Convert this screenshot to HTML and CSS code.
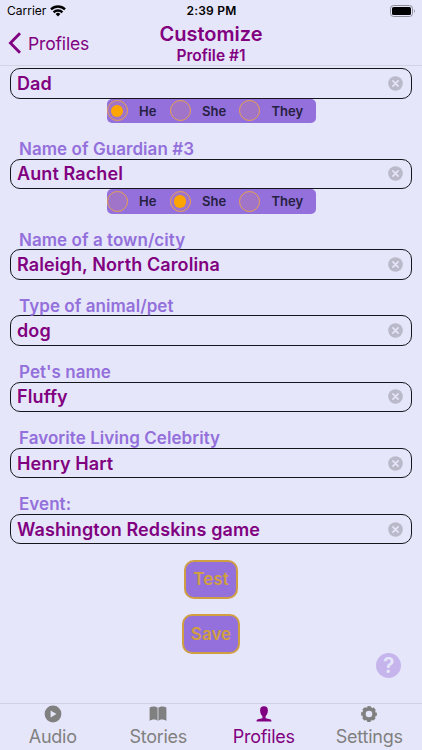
FILE: index.html
```html
<!DOCTYPE html>
<html lang="en">
<head>
    <meta charset="UTF-8">
    <meta name="viewport" content="width=device-width, initial-scale=1.0">
    <title>Customize Profile</title>
    <link rel="stylesheet" href="styles.css">
</head>
<body>
    <!-- shared icons -->
    <svg class="symbols" width="0" height="0">
        <symbol id="clear" viewBox="0 0 15 15">
            <circle cx="7.5" cy="7.5" r="7.3" fill="#b9b9ca"/>
            <path d="M4.9 4.9l5.2 5.2M10.1 4.9l-5.2 5.2" stroke="#e6e6fa" stroke-width="1.6" stroke-linecap="round"/>
        </symbol>
    </svg>

    <div class="app">
        <header class="header">
            <div class="status-bar">
                <div class="carrier">
                    <span>Carrier</span>
                    <svg width="16" height="12" viewBox="0 0 16 12" fill="none" stroke="#000" stroke-width="2.4">
                        <path d="M1 4.4a10 10 0 0 1 14 0"/>
                        <path d="M3.6 7.3a6.3 6.3 0 0 1 8.8 0"/>
                        <path d="M8 11.4L5.6 9a3.5 3.5 0 0 1 4.8 0z" fill="#000" stroke="none"/>
                    </svg>
                </div>
                <div class="time">2:39 PM</div>
                <svg class="battery" width="26" height="12" viewBox="0 0 26 12">
                    <rect x="0.5" y="0.5" width="22" height="11" rx="3" fill="none" stroke="#8e8e9a"/>
                    <rect x="2" y="2" width="19" height="8" rx="1.6" fill="#000"/>
                    <path d="M24 4.2v3.6c1.1-.5 1.1-3.1 0-3.6z" fill="#8e8e9a"/>
                </svg>
            </div>
            <div class="nav">
                <div class="back">
                    <svg width="13" height="22" viewBox="0 0 13 22" fill="none" stroke="#800080" stroke-width="2.8">
                        <path d="M12 1.2L2.4 11l9.6 9.8"/>
                    </svg>
                    <span>Profiles</span>
                </div>
                <div class="titles">
                    <div class="title">Customize</div>
                    <div class="subtitle">Profile #1</div>
                </div>
            </div>
        </header>

        <main class="form">
            <div class="field with-pronouns">
                <div class="input"><span>Dad</span><svg width="15" height="15"><use href="#clear"/></svg></div>
                <div class="pronouns">
                    <span class="radio checked"></span><span class="option he">He</span>
                    <span class="radio"></span><span class="option she">She</span>
                    <span class="radio"></span><span class="option they">They</span>
                </div>
            </div>
            <div class="field with-pronouns">
                <div class="label">Name of Guardian #3</div>
                <div class="input"><span>Aunt Rachel</span><svg width="15" height="15"><use href="#clear"/></svg></div>
                <div class="pronouns">
                    <span class="radio"></span><span class="option he">He</span>
                    <span class="radio checked"></span><span class="option she">She</span>
                    <span class="radio"></span><span class="option they">They</span>
                </div>
            </div>
            <div class="field">
                <div class="label">Name of a town/city</div>
                <div class="input"><span>Raleigh, North Carolina</span><svg width="15" height="15"><use href="#clear"/></svg></div>
            </div>
            <div class="field">
                <div class="label">Type of animal/pet</div>
                <div class="input"><span>dog</span><svg width="15" height="15"><use href="#clear"/></svg></div>
            </div>
            <div class="field">
                <div class="label">Pet's name</div>
                <div class="input"><span>Fluffy</span><svg width="15" height="15"><use href="#clear"/></svg></div>
            </div>
            <div class="field">
                <div class="label">Favorite Living Celebrity</div>
                <div class="input"><span>Henry Hart</span><svg width="15" height="15"><use href="#clear"/></svg></div>
            </div>
            <div class="field">
                <div class="label">Event:</div>
                <div class="input"><span>Washington Redskins game</span><svg width="15" height="15"><use href="#clear"/></svg></div>
            </div>

            <div class="buttons">
                <button class="btn btn-test">Test</button>
                <button class="btn btn-save">Save</button>
            </div>
            <div class="help">?</div>
        </main>

        <nav class="tabs">
            <div class="tab">
                <svg width="18" height="18" viewBox="0 0 18 18">
                    <circle cx="9" cy="9" r="8.4" fill="#808080"/>
                    <path d="M6.6 5.4v7.2L12.4 9z" fill="#e6e6fa"/>
                </svg>
                <span>Audio</span>
            </div>
            <div class="tab">
                <svg width="18" height="18" viewBox="0 0 18 18" fill="#808080">
                    <path d="M.6 2.4C3 1.1 6.5 1.1 8.6 2.6V15.8C6.5 14 3 14 .6 16z"/>
                    <path d="M17.4 2.4C15 1.1 11.5 1.1 9.4 2.6V15.8C11.5 14 15 14 17.4 16z"/>
                </svg>
                <span>Stories</span>
            </div>
            <div class="tab active">
                <svg width="18" height="18" viewBox="0 0 18 18" fill="#800080">
                    <path d="M9 1.2C6.4 1.2 5.1 2.8 5.1 5.2c0 2.5.9 4.700 2.300 6v2L3 14.300C1.900 14.600 1.500 15.400 1.500 16.500h15c0-1.100-.4-1.900-1.500-2.200L10.600 13.200v-2C12 9.900 12.900 7.700 12.900 5.200 12.900 2.800 11.600 1.200 9 1.200z"/>
                </svg>
                <span>Profiles</span>
            </div>
            <div class="tab">
                <svg width="18" height="18" viewBox="0 0 18 18" fill="none" stroke="#808080">
                    <circle cx="9" cy="9" r="5.1" stroke-width="3.6"/>
                    <circle cx="9" cy="9" r="6.8" stroke-width="2.2" stroke-dasharray="3.4 1.94" stroke-dashoffset="1.7"/>
                </svg>
                <span>Settings</span>
            </div>
        </nav>
    </div>
</body>
</html>
```
FILE: styles.css
```css
* {
    margin: 0;
    padding: 0;
    box-sizing: border-box;
}

body {
    font-family: Inter, "Liberation Sans", sans-serif;
    background-color: #e6e6fa;
    color: #800080;
}

svg {
    display: block;
    flex-shrink: 0;
}

.symbols {
    position: absolute;
}

.app {
    display: flex;
    flex-direction: column;
    height: 750px;
    overflow: hidden;
}

.header {
    height: 66px;
    border-bottom: 1px solid #d3d3e6;
}

.status-bar {
    display: flex;
    justify-content: space-between;
    height: 22px;
    padding: 0 6px 0 7px;
    color: #000;
    font-size: 12px;
    line-height: 22px;
}

.carrier,
.battery {
    width: 70px;
}

.carrier {
    display: flex;
    align-items: center;
    gap: 4px;
}

.time {
    font-weight: 600;
    letter-spacing: 0.2px;
}

.battery {
    width: 26px;
    margin: 5px 0 0 44px;
}

.nav {
    display: grid;
    grid-template-columns: 1fr auto 1fr;
    height: 43px;
}

.back {
    display: flex;
    align-items: center;
    gap: 7px;
    height: 42px;
    padding-left: 8px;
    font-size: 17.5px;
    letter-spacing: -0.15px;
}

.titles {
    text-align: center;
    font-weight: 600;
}

.title {
    height: 24px;
    font-size: 20px;
    line-height: 25px;
}

.subtitle {
    font-size: 15.5px;
    line-height: 20px;
}

.form {
    display: flex;
    flex: 1;
    flex-direction: column;
    padding: 2px 10.4px 0;
}

.field {
    height: 66.2px;
}

.field.with-pronouns {
    height: 90.7px;
}

.field.with-pronouns:first-child {
    height: 69px;
}

.label {
    height: 21.5px;
    padding-left: 8.6px;
    color: #9370db;
    font-size: 17px;
    font-weight: 600;
    letter-spacing: 0.05px;
    line-height: 24px;
}

.input {
    display: flex;
    align-items: center;
    justify-content: space-between;
    height: 30.5px;
    padding: 0 7.5px 0 5.6px;
    border: 1.3px solid #15151c;
    border-radius: 10px;
    font-size: 18px;
    font-weight: 600;
    letter-spacing: 0.11px;
}

.pronouns {
    display: flex;
    align-items: center;
    width: 209px;
    height: 24.5px;
    margin: 0 auto;
    border-radius: 5px;
    background-color: #9370db;
    color: #25203f;
    font-size: 13px;
    font-weight: 600;
}

.radio {
    display: flex;
    align-items: center;
    justify-content: center;
    flex-shrink: 0;
    width: 21px;
    height: 21px;
    border: 1px solid #eba14f;
    border-radius: 50%;
    background-color: #a074c8;
}

.radio.checked::before {
    content: "";
    width: 12.5px;
    height: 12.5px;
    border-radius: 50%;
    background-color: #ffa500;
}

.option {
    padding-left: 11.5px;
}

.he {
    width: 42px;
}

.she {
    width: 48.5px;
}

.buttons {
    display: flex;
    flex-direction: column;
    align-items: center;
    gap: 15px;
    margin-top: 1px;
}

.btn {
    height: 39.5px;
    border: 2px solid #d09f42;
    border-radius: 10px;
    background-color: #9370db;
    color: #d09f42;
    font-family: inherit;
    font-size: 17px;
    font-weight: 600;
}

.btn-test {
    width: 54px;
}

.btn-save {
    width: 58px;
}

.help {
    align-self: flex-end;
    width: 25px;
    height: 25px;
    margin-top: -1px;
    margin-right: 10.4px;
    border-radius: 50%;
    background-color: #c6b5ec;
    color: #e6e6fa;
    font-size: 21px;
    font-weight: 600;
    line-height: 25px;
    text-align: center;
}

.tabs {
    display: grid;
    grid-template-columns: repeat(4, 1fr);
    height: 47px;
    border-top: 1px solid #d3d0e6;
}

.tab {
    display: flex;
    flex-direction: column;
    align-items: center;
    padding-top: 1px;
    color: #808080;
    font-size: 18px;
    letter-spacing: -0.25px;
    line-height: 28px;
}

.tab.active {
    color: #800080;
}
```
